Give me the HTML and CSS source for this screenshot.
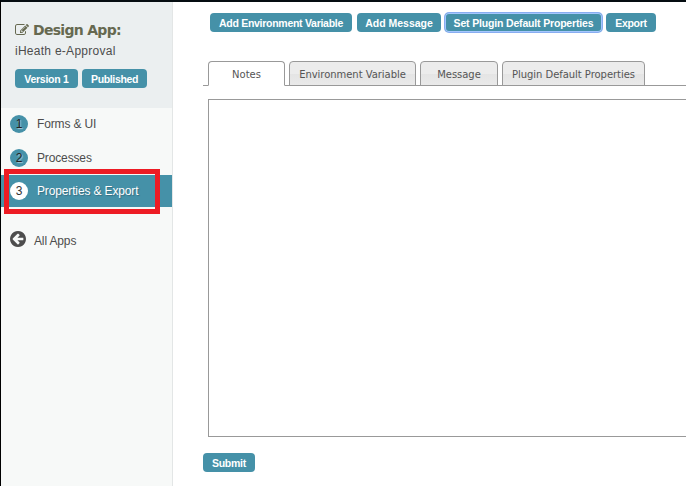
FILE: index.html
```html
<!DOCTYPE html>
<html lang="en">
<head>
<meta charset="utf-8">
<title>Design App</title>
<link rel="stylesheet" href="styles.css">
</head>
<body>
<div class="app">
  <aside class="sidebar">
    <header class="app-head">
      <h1 class="title"><svg class="edit" viewBox="0 0 1792 1792"><path d="M888 1184l116-116-152-152-116 116v56h96v96h56zm440-720q-16-16-33 1l-350 350q-17 17-1 33t33-1l350-350q17-17 1-33zm80 594v190q0 119-84.5 203.5t-203.5 84.5h-832q-119 0-203.5-84.5t-84.5-203.5v-832q0-119 84.5-203.5t203.5-84.5h832q63 0 117 25 15 7 18 23 3 17-9 29l-49 49q-14 14-32 8-23-6-45-6h-832q-66 0-113 47t-47 113v832q0 66 47 113t113 47h832q66 0 113-47t47-113v-126q0-13 9-22l64-64q15-15 35-7t20 29zm-96-738l288 288-672 672h-288v-288zm444 132l-92 92-288-288 92-92q28-28 68-28t68 28l152 152q28 28 28 68t-28 68z"/></svg><span>Design App:</span></h1>
      <div class="name">iHeath e-Approval</div>
      <div class="badges"><button class="btn version">Version 1</button><button class="btn published">Published</button></div>
    </header>
    <nav class="menu">
      <a class="item"><span class="num">1</span><span>Forms &amp; UI</span></a>
      <a class="item"><span class="num">2</span><span>Processes</span></a>
      <a class="item active"><span class="num">3</span><span>Properties &amp; Export</span></a>
      <a class="item all"><svg class="back" viewBox="128 128 1536 1536"><path d="M1408 960v-128q0-26-19-45t-45-19h-502l189-189q19-19 19-45t-19-45l-91-91q-18-18-45-18t-45 18l-362 362-91 91q-18 18-18 45t18 45l91 91 362 362q18 18 45 18t45-18l91-91q18-18 18-45t-18-45l-189-189h502q26 0 45-19t19-45zm256-64q0 209-103 385.5t-279.5 279.5-385.5 103-385.5-103-279.5-279.5-103-385.5 103-385.5 279.5-279.5 385.5-103 385.5 103 279.5 279.5 103 385.5z"/></svg><span>All Apps</span></a>
    </nav>
  </aside>
  <main class="main">
    <div class="toolbar">
      <button class="btn add-env">Add Environment Variable</button>
      <button class="btn add-msg">Add Message</button>
      <button class="btn set-plugin focused">Set Plugin Default Properties</button>
      <button class="btn export">Export</button>
    </div>
    <div class="tabs">
      <div class="tab tab-notes selected">Notes</div>
      <div class="tab tab-env">Environment Variable</div>
      <div class="tab tab-msg">Message</div>
      <div class="tab tab-plugin">Plugin Default Properties</div>
    </div>
    <div class="notes-field"></div>
    <button class="btn submit">Submit</button>
  </main>
  <div class="highlight"></div>
</div>
</body>
</html>
```
FILE: styles.css
```css
* { box-sizing: border-box; }
body { margin: 0; background: #fff; font-family: "Liberation Sans", Arial, sans-serif; }
.app {
  position: relative;
  display: flex;
  width: 686px;
  height: 486px;
  overflow: hidden;
  border-top: 2px solid #050d11;
  border-left: 1px solid #000;
}
.sidebar {
  flex: none;
  width: 172px;
  background: #f7f9f8;
  border-right: 1px solid #e3e6e6;
}
.app-head { height: 106px; padding: 19px 0 0 14px; background: #ebeff0; }
.title {
  display: flex;
  align-items: center;
  gap: 4px;
  height: 18px;
  margin: 0;
  color: #666950;
  font: bold 14px/18px "DejaVu Sans", sans-serif;
  letter-spacing: -0.7px;
  white-space: nowrap;
}
.edit { flex: none; width: 14px; height: 14px; fill: #666950; }
.name { margin-top: 4px; color: #4d4d4d; font-size: 12px; line-height: 17px; letter-spacing: 0.27px; }
.badges { display: flex; gap: 4px; margin-top: 9px; }
.btn {
  flex: none;
  height: 19px;
  padding: 0;
  border: 0;
  border-radius: 4px;
  background: #4591a8;
  color: #fff;
  font: bold 10.5px/20px "Liberation Sans", Arial, sans-serif;
  letter-spacing: -0.25px;
  white-space: nowrap;
}
.version { width: 63px; }
.published { width: 65px; letter-spacing: -0.35px; }
.item {
  display: flex;
  align-items: center;
  gap: 9px;
  height: 32px;
  margin-bottom: 1px;
  padding-left: 9px;
  color: #4d4d4d;
  font-size: 12px;
  letter-spacing: -0.14px;
}
.num {
  width: 18px;
  height: 18px;
  border-radius: 9px;
  background: #4591a8;
  color: #222;
  line-height: 18px;
  text-align: center;
  text-shadow: 1px 1px 1px #a9cbd5;
}
.active { background: #4591a8; color: #fff; text-shadow: 1px 1px 1px #386f80; }
.active .num { background: #fff; color: #333; text-shadow: none; }
.menu .item:first-child { margin-bottom: 2px; }
.all { margin-top: 18px; gap: 8px; }
.back { width: 16px; height: 16px; margin-top: -5px; fill: #4d4d4d; }
.main { flex: 1; min-width: 0; padding: 11px 0 0 30px; }
.toolbar { display: flex; padding-left: 7px; }
.add-env { width: 142px; margin-right: 5px; letter-spacing: -0.28px; }
.add-msg { width: 84px; margin-right: 4px; letter-spacing: 0; }
.set-plugin { width: 157px; margin-right: 4px; letter-spacing: -0.17px; }
.export { width: 50px; letter-spacing: -0.3px; }
.focused { box-shadow: inset 0 0 0 1px #a5c7fe, 0 0 0 1px #88adf0; }
.tabs {
  display: flex;
  gap: 4px;
  height: 25px;
  margin-top: 29px;
  padding-left: 5px;
  background: linear-gradient(#999, #999) 0 100% / 100% 1px no-repeat;
}
.tab {
  flex: none;
  height: 25px;
  border: 1px solid #999;
  border-radius: 4px 4px 0 0;
  background: linear-gradient(#ececec 50%, #e4e4e4 52%, #eaeaea);
  color: #555;
  font: 10px/25px "DejaVu Sans", Verdana, sans-serif;
  letter-spacing: -0.04px;
  text-align: center;
  white-space: nowrap;
}
.selected { border-bottom-color: #fff; background: #fff; }
.tab-notes { width: 77px; letter-spacing: 0; }
.tab-env { width: 127px; }
.tab-msg { width: 78px; }
.tab-plugin { width: 143px; }
.notes-field { height: 338px; margin: 13px 0 0 5px; border: 1px solid #999; border-right: 0; }
.submit { display: block; width: 52px; margin-top: 16px; }
.highlight {
  position: absolute;
  left: 3px;
  top: 167px;
  width: 156px;
  height: 45px;
  border: 5px solid #ed1c24;
}
```
